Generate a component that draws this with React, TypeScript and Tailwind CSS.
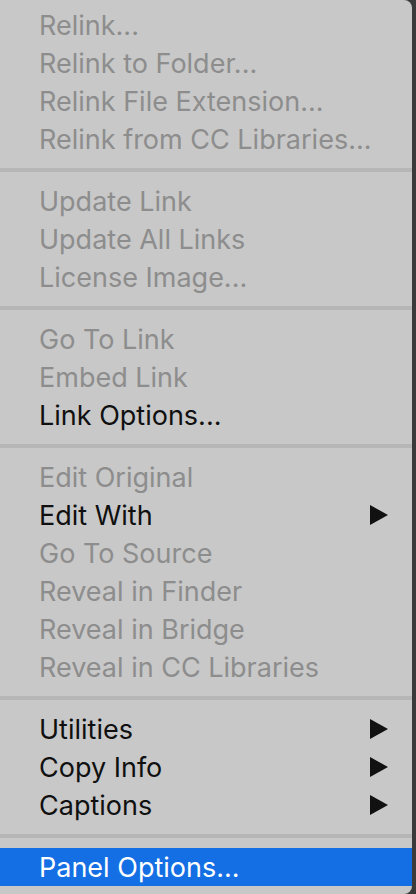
import React from "react";

type Item = { label: string; enabled?: boolean; sub?: boolean };

const groups: Item[][] = [
  [
    { label: "Relink..." },
    { label: "Relink to Folder..." },
    { label: "Relink File Extension..." },
    { label: "Relink from CC Libraries..." },
  ],
  [
    { label: "Update Link" },
    { label: "Update All Links" },
    { label: "License Image..." },
  ],
  [
    { label: "Go To Link" },
    { label: "Embed Link" },
    { label: "Link Options...", enabled: true },
  ],
  [
    { label: "Edit Original" },
    { label: "Edit With", enabled: true, sub: true },
    { label: "Go To Source" },
    { label: "Reveal in Finder" },
    { label: "Reveal in Bridge" },
    { label: "Reveal in CC Libraries" },
  ],
  [
    { label: "Utilities", enabled: true, sub: true },
    { label: "Copy Info", enabled: true, sub: true },
    { label: "Captions", enabled: true, sub: true },
  ],
];

function Arrow() {
  return (
    <svg width="18" height="20" viewBox="0 0 18 20" className="shrink-0">
      <polygon points="0,0 18,10 0,20" fill="#111111" />
    </svg>
  );
}

function Row({ item }: { item: Item }) {
  return (
    <div
      className={`flex h-[38px] items-center justify-between pl-[39px] pr-[24px] text-[27px] leading-none ${
        item.enabled ? "text-[#101010]" : "text-[#8d8d8d]"
      }`}
    >
      <span>{item.label}</span>
      {item.sub ? <Arrow /> : null}
    </div>
  );
}

export default function App() {
  return (
    <div
      className="h-[894px] w-[416px] overflow-hidden bg-[#3b3b3b]"
      style={{ fontFamily: "Inter, 'Noto Sans', sans-serif" }}
    >
      <div className="flex w-[412px] flex-col rounded-r-[8px] bg-[#c8c8c8] pt-[6px] pb-[8px]">
        {groups.map((g, gi) => (
          <React.Fragment key={gi}>
            {gi > 0 && <div className="my-[10px] h-[4px] bg-[#b6b6b6]" />}
            <div className="flex flex-col">
              {g.map((it) => (
                <Row key={it.label} item={it} />
              ))}
            </div>
          </React.Fragment>
        ))}
        <div className="my-[10px] h-[4px] bg-[#b6b6b6]" />
        <div className="flex h-[38px] items-center bg-[#136fe3] pl-[39px] text-[27px] leading-none text-white">
          Panel Options...
        </div>
      </div>
    </div>
  );
}
